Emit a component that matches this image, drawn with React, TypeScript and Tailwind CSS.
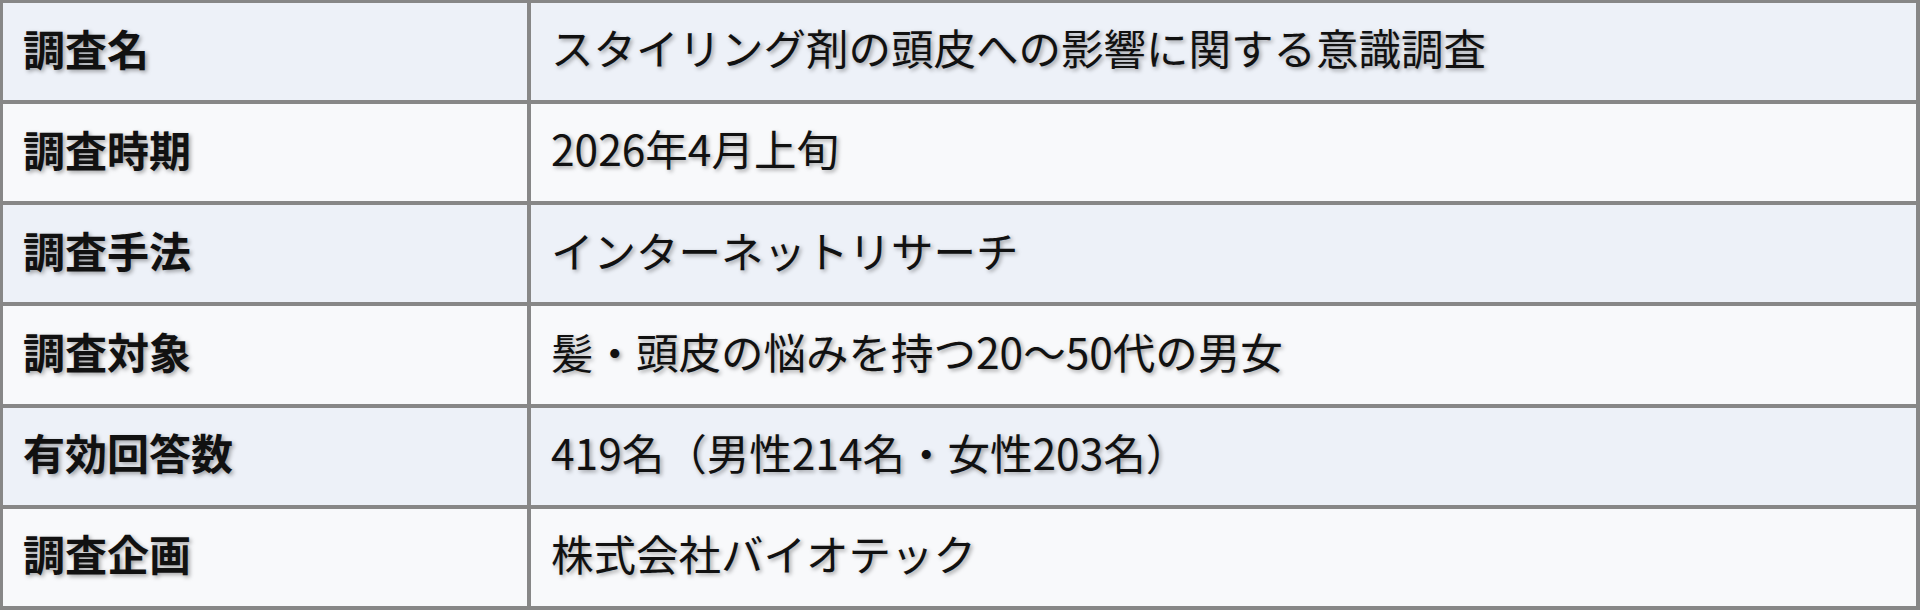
import React from 'react';

interface Row {
  label: string;
  value: string;
}

const rows: Row[] = [
  { label: '調査名', value: 'スタイリング剤の頭皮への影響に関する意識調査' },
  { label: '調査時期', value: '2026年4月上旬' },
  { label: '調査手法', value: 'インターネットリサーチ' },
  { label: '調査対象', value: '髪・頭皮の悩みを持つ20〜50代の男女' },
  { label: '有効回答数', value: '419名（男性214名・女性203名）' },
  { label: '調査企画', value: '株式会社バイオテック' },
];

export default function App() {
  return (
    <div
      className="w-[1920px] h-[610px] bg-[#878787] pt-[3px] pl-[3px] pr-[4px] pb-[4px] grid grid-cols-[524px_1fr] grid-rows-[repeat(6,1fr)] gap-[4px] leading-none text-[#111] [text-shadow:2px_2px_4px_rgba(0,0,0,0.35)]"
      style={{ fontFamily: '"Noto Sans CJK JP", "Noto Sans", sans-serif' }}
    >
      {rows.map((row, i) => (
        <React.Fragment key={row.label}>
          {/* 項目名 */}
          <div
            className={`flex items-center px-5 pb-[8px] text-[42px] font-bold ${
              i % 2 === 0 ? 'bg-[#edf1f8]' : 'bg-[#f8f9fb]'
            }`}
          >
            {row.label}
          </div>
          {/* 内容 */}
          <div
            className={`flex items-center px-5 pb-[8px] text-[42.5px] ${
              i % 2 === 0 ? 'bg-[#edf1f8]' : 'bg-[#f8f9fb]'
            }`}
          >
            {row.value}
          </div>
        </React.Fragment>
      ))}
    </div>
  );
}
